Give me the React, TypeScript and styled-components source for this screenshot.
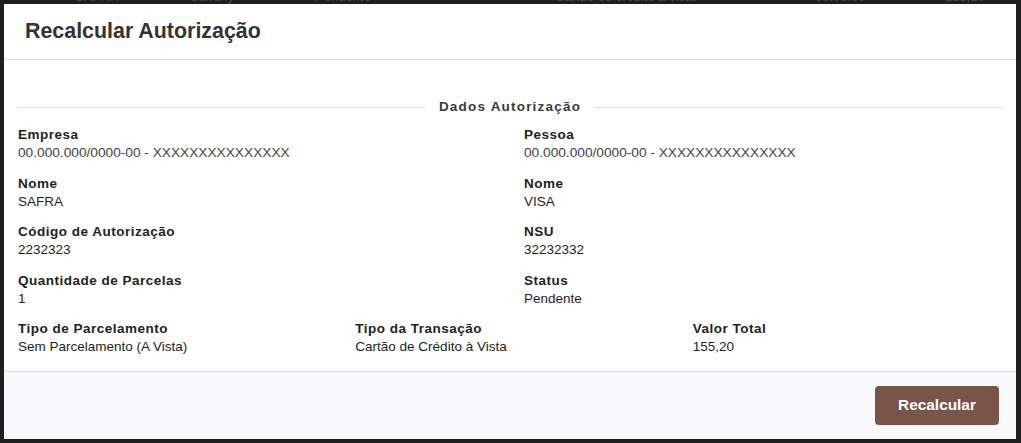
import React from "react";
import styled, { createGlobalStyle } from "styled-components";

const Global = createGlobalStyle`
  html, body { margin: 0; padding: 0; }
  body {
    width: 1021px;
    height: 443px;
    overflow: hidden;
    background: #1f1f1f;
    font-family: "Liberation Sans", Arial, sans-serif;
  }
`;

const Page = styled.div`
  position: relative;
  width: 1021px;
  height: 443px;
  background: #1f1f1f;
  overflow: hidden;
`;

const BehindRow = styled.div`
  display: grid;
  grid-template-columns: 75px 115px 125px 240px 260px 130px 1fr;
  margin-top: -11px;
  font-size: 13px;
  line-height: 16px;
  color: #4a4a4a;
`;

const BehindCell = styled.span`
  white-space: nowrap;
`;

const Modal = styled.div`
  position: absolute;
  left: 4px;
  top: 4px;
  width: 1012px;
  height: 435px;
  background: #fff;
  display: flex;
  flex-direction: column;
`;

const Header = styled.div`
  height: 55px;
  flex: none;
  display: flex;
  align-items: center;
  padding: 0 21px;
  border-bottom: 1px solid #dedede;
`;

const Title = styled.h2`
  margin: 0;
  font-size: 21.4px;
  font-weight: 700;
  color: #333;
  line-height: 24px;
  padding-bottom: 1px;
`;

const Body = styled.div`
  flex: 1;
  padding: 37.5px 14px 0;
  display: flex;
  flex-direction: column;
`;

const SectionTitle = styled.div`
  display: flex;
  align-items: center;
  gap: 14px;
  height: 18px;
  margin-bottom: 10.5px;
  font-size: 13.5px;
  font-weight: 700;
  letter-spacing: 1.2px;
  color: #3a3a3a;
  &::before, &::after {
    content: "";
    flex: 1;
    height: 1px;
    background: #dfdfdf;
    margin-top: 1px;
  }
`;

const Grid = styled.div<{ $cols: number }>`
  display: grid;
  grid-template-columns: repeat(${(p) => p.$cols}, 1fr);
  column-gap: 28px;
  margin-bottom: 12.5px;
`;

const Field = styled.div`
  display: flex;
  flex-direction: column;
`;

const Label = styled.div`
  font-size: 13.5px;
  line-height: 18px;
  font-weight: 700;
  letter-spacing: 0.5px;
  color: #222;
`;

const Value = styled.div<{ $muted?: boolean }>`
  font-size: ${(p) => (p.$muted ? "13.7px" : "13.5px")};
  line-height: 18px;
  color: ${(p) => (p.$muted ? "#444" : "#1e1e1e")};
`;

const Footer = styled.div`
  height: 67px;
  flex: none;
  border-top: 1px solid #dcdde0;
  background: #f8f9fa;
  display: flex;
  align-items: center;
  justify-content: flex-end;
  padding: 0 17px;
`;

const Button = styled.button`
  height: 39px;
  width: 124px;
  border: none;
  border-radius: 4px;
  background: #795548;
  color: #fff;
  font-family: "Liberation Sans", Arial, sans-serif;
  font-size: 15.4px;
  font-weight: 700;
  cursor: pointer;
  margin-bottom: 1px;
`;

type F = { label: string; value: string; muted?: boolean };

const rows: F[][] = [
  [
    { label: "Empresa", value: "00.000.000/0000-00 - XXXXXXXXXXXXXXX", muted: true },
    { label: "Pessoa", value: "00.000.000/0000-00 - XXXXXXXXXXXXXXX", muted: true },
  ],
  [
    { label: "Nome", value: "SAFRA" },
    { label: "Nome", value: "VISA" },
  ],
  [
    { label: "Código de Autorização", value: "2232323" },
    { label: "NSU", value: "32232332" },
  ],
  [
    { label: "Quantidade de Parcelas", value: "1" },
    { label: "Status", value: "Pendente" },
  ],
  [
    { label: "Tipo de Parcelamento", value: "Sem Parcelamento (A Vista)" },
    { label: "Tipo da Transação", value: "Cartão de Crédito à Vista" },
    { label: "Valor Total", value: "155,20" },
  ],
];

export default function App() {
  return (
    <Page>
      <Global />
      <BehindRow>
        <BehindCell />
        <BehindCell>SAFRA</BehindCell>
        <BehindCell>Safra ly</BehindCell>
        <BehindCell>Pendente</BehindCell>
        <BehindCell>Cartão de crédito à vista</BehindCell>
        <BehindCell>00.00.00</BehindCell>
        <BehindCell>155,20</BehindCell>
      </BehindRow>
      <Modal>
        <Header>
          <Title>Recalcular Autorização</Title>
        </Header>
        <Body>
          <SectionTitle>Dados Autorização</SectionTitle>
          {rows.map((r, i) => (
            <Grid key={i} $cols={r.length}>
              {r.map((f, j) => (
                <Field key={j}>
                  <Label>{f.label}</Label>
                  <Value $muted={f.muted}>{f.value}</Value>
                </Field>
              ))}
            </Grid>
          ))}
        </Body>
        <Footer>
          <Button>Recalcular</Button>
        </Footer>
      </Modal>
    </Page>
  );
}
